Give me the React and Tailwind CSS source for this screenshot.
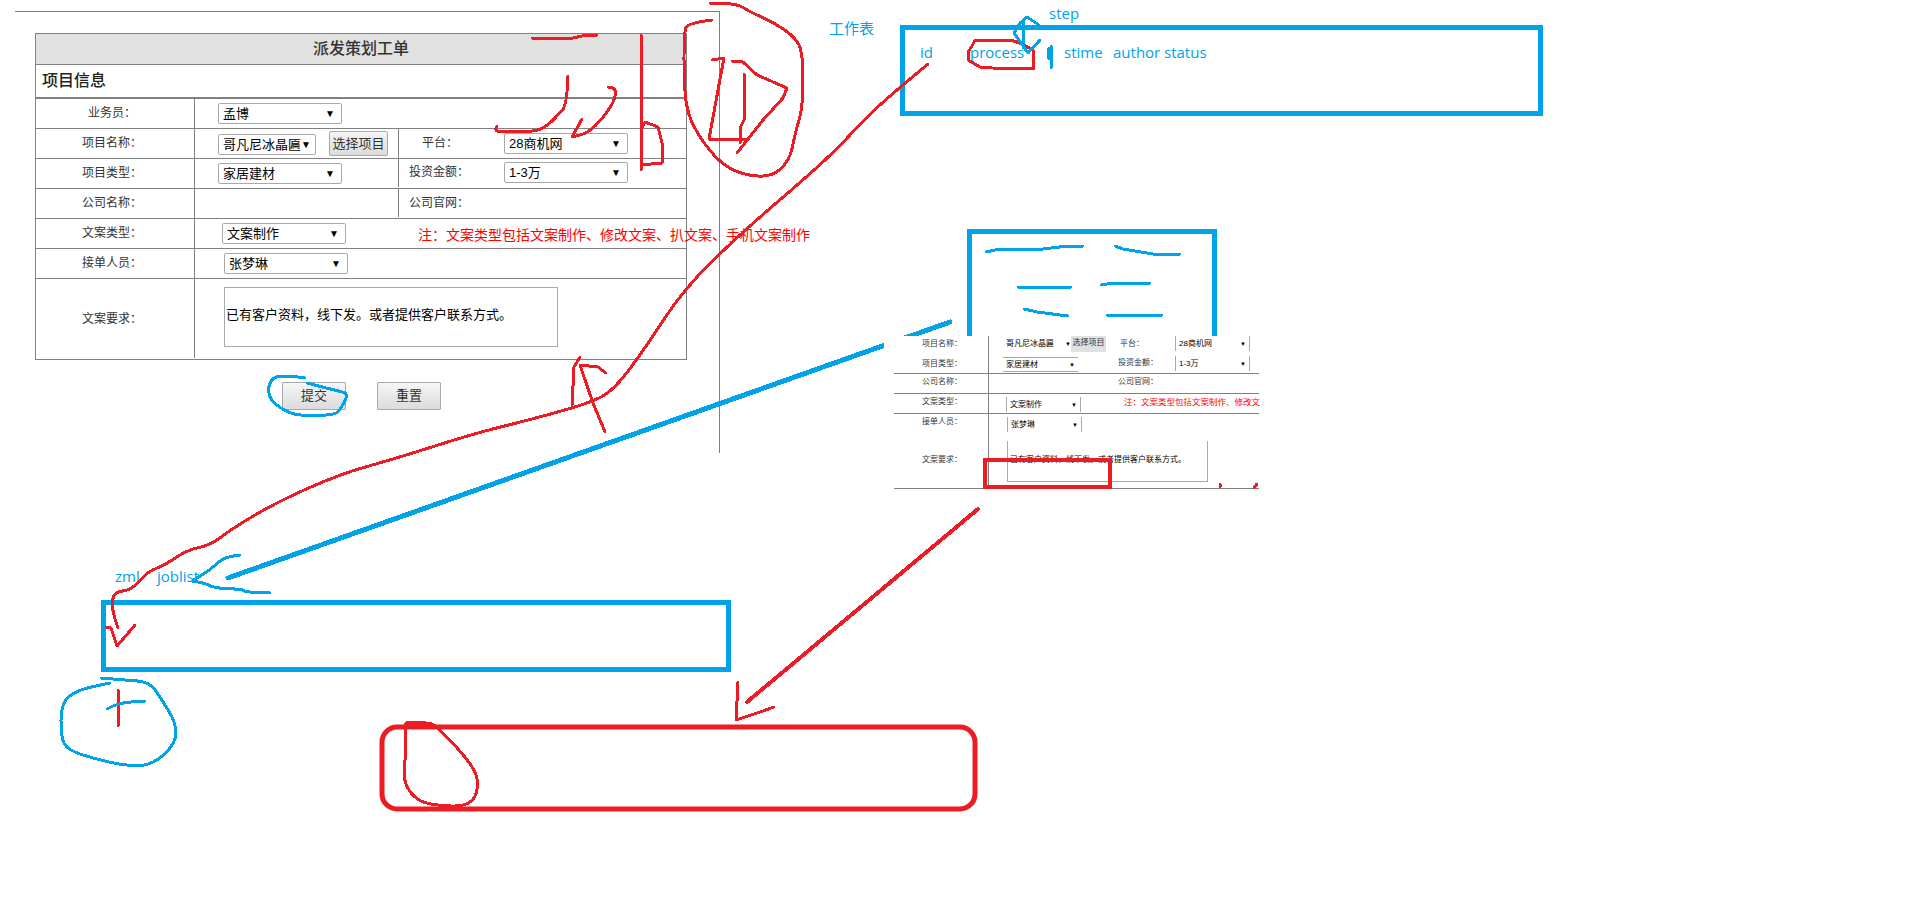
const RED = "#ed1c24";
const BLUE = "#00a2e8";
const COLON = "\uFF1A";
const COMMA = "\uFF0C";

function Ink({ pts, w = 3, c = RED }) {
  return <polyline points={pts} fill="none" stroke={c} strokeWidth={w} strokeLinejoin="round" strokeLinecap="round" shapeRendering="crispEdges" />;
}

// Freehand curve: rounds the corners between the sampled points of a stroke.
function Curve({ pts, w = 3, c = RED }) {
  const p = pts.split(" ").map((s) => s.split(",").map(Number));
  let d = `M${p[0][0]} ${p[0][1]}`;
  for (let i = 1; i < p.length - 1; i++) {
    const mx = (p[i][0] + p[i + 1][0]) / 2;
    const my = (p[i][1] + p[i + 1][1]) / 2;
    d += ` Q${p[i][0]} ${p[i][1]} ${mx} ${my}`;
  }
  const last = p[p.length - 1];
  d += ` L${last[0]} ${last[1]}`;
  return <path d={d} fill="none" stroke={c} strokeWidth={w} strokeLinecap="round" strokeLinejoin="round" shapeRendering="crispEdges" />;
}

function Sel({ text, w = "w-[124px]" }) {
  return (
    <div className={`flex h-[21px] ${w} items-center justify-between rounded-[2px] border border-[#a9a9a9] bg-white pl-[4px] pr-[6px] text-[13px] leading-none text-black`}>
      <span className="whitespace-nowrap">{text}</span>
      <span className="text-[10px] leading-none">▼</span>
    </div>
  );
}

function Row({ label, h = "h-[30px]", border = "border-b border-[#808080]", labelClass = "pb-[1px]", children }) {
  return (
    <div className={`flex ${h} ${border}`}>
      <div className={`flex w-[159px] shrink-0 items-center justify-center border-r border-[#808080] pr-[6px] text-[12px] text-[#333] ${labelClass}`}>{label + COLON}</div>
      <div className="flex min-w-0 flex-1 items-start">{children}</div>
    </div>
  );
}

function Form() {
  return (
    <div className="absolute left-[35px] top-[33px] h-[327px] w-[652px] border border-[#808080] bg-white">
      <div className="flex h-[31px] items-center justify-center border-b border-[#808080] bg-[#e1e1e1] text-[16px] font-medium text-[#333]">派发策划工单</div>
      <div className="flex h-[34px] items-center border-b-2 border-[#808080] pl-[6px] text-[16px] font-medium text-[#222]">项目信息</div>
      <Row label="业务员">
        <div className="ml-[23px] mt-[4px]"><Sel text="孟博" /></div>
      </Row>
      <Row label="项目名称">
        <div className="ml-[23px] mt-[5px]"><Sel text="哥凡尼冰晶匾" w="w-[98px]" /></div>
        <button className="ml-[13px] mt-[2px] h-[25px] w-[59px] rounded-[2px] border border-[#a9a9a9] bg-gradient-to-b from-[#f4f4f4] to-[#dcdcdc] text-[13px] text-[#333]">选择项目</button>
        <div className="ml-[10px] flex h-[29px] w-[106px] items-center border-l border-[#808080] pb-[1px] pl-[23px] text-[12px] text-[#333]">{"平台" + COLON}</div>
        <div className="mt-[4px]"><Sel text="28商机网" /></div>
      </Row>
      <Row label="项目类型">
        <div className="ml-[23px] mt-[4px]"><Sel text="家居建材" /></div>
        <div className="ml-[56px] flex h-[28px] w-[106px] items-center border-l border-[#808080] pb-[2px] pl-[10px] text-[12px] text-[#333]">{"投资金额" + COLON}</div>
        <div className="mt-[3px]"><Sel text="1-3万" /></div>
      </Row>
      <Row label="公司名称">
        <div className="ml-[203px] flex h-[28px] items-center border-l border-[#808080] pl-[10px] text-[12px] text-[#333]">{"公司官网" + COLON}</div>
      </Row>
      <Row label="文案类型">
        <div className="ml-[27px] mt-[4px]"><Sel text="文案制作" /></div>
        <div className="ml-[72px] mt-[6px] whitespace-nowrap text-[14px] leading-[20px] text-[#ff0000]">{"注" + COLON + "文案类型包括文案制作、修改文案、扒文案、手机文案制作"}</div>
      </Row>
      <Row label="接单人员">
        <div className="ml-[29px] mt-[4px]"><Sel text="张梦琳" /></div>
      </Row>
      <Row label="文案要求" h="h-[79px]" border="" labelClass="">
        <div className="ml-[29px] mt-[8px] flex h-[60px] w-[334px] items-center border border-[#a9a9a9] pb-[4px] pl-[1px] text-[13px] text-black">{"已有客户资料" + COMMA + "线下发。或者提供客户联系方式。"}</div>
      </Row>
    </div>
  );
}

function SubmitRow() {
  return (
    <div className="absolute left-[282px] top-[382px] flex gap-[31px] text-[13px] text-[#333]">
      <button className="h-[28px] w-[64px] rounded-[1px] border border-[#a9a9a9] bg-gradient-to-b from-[#f6f6f6] to-[#dcdcdc]">提交</button>
      <button className="h-[28px] w-[64px] rounded-[1px] border border-[#a9a9a9] bg-gradient-to-b from-[#f6f6f6] to-[#dcdcdc]">重置</button>
    </div>
  );
}

function MiniSel({ text, sides = "border-x border-[#a9a9a9]", w = "w-[75px]" }) {
  return (
    <div className={`flex h-[15px] ${w} items-center justify-between ${sides} px-[3px] text-[8px] leading-none text-black`}>
      <span className="whitespace-nowrap">{text}</span>
      <span className="text-[6px]">▼</span>
    </div>
  );
}

function MiniRow({ label, h, line, children }) {
  return (
    <div className={`flex ${h} ${line ? "border-b border-[#808080]" : ""}`}>
      <div className="w-[95px] shrink-0 border-r border-[#808080] pl-[28px] pt-[3px] text-[8px] leading-[10px] text-[#333]">{label + COLON}</div>
      <div className="relative flex min-w-0 flex-1 items-start">{children}</div>
    </div>
  );
}

function Pasted() {
  return (
    <div className="absolute left-[884px] top-[336px] h-[154px] w-[375px] bg-white pl-[10px]">
      <MiniRow label="项目名称" h="h-[20px]">
        <div className="ml-[17px] flex w-[65px] justify-between pt-[3px] text-[8px] leading-[10px] text-black"><span className="whitespace-nowrap">哥凡尼冰晶匾</span><span className="text-[6px]">▼</span></div>
        <div className="h-[16px] w-[35px] bg-[#e1e1e1] text-center text-[8px] leading-[14px] text-[#333]">选择项目</div>
        <div className="ml-[14px] w-[55px] pt-[3px] text-[8px] leading-[10px] text-[#333]">{"平台" + COLON}</div>
        <MiniSel text="28商机网" />
      </MiniRow>
      <MiniRow label="项目类型" h="h-[18px]" line>
        <div className="ml-[14px] mt-[1px]"><MiniSel text="家居建材" sides="border-y border-[#a9a9a9]" /></div>
        <div className="ml-[40px] w-[57px] pt-[2px] text-[8px] leading-[10px] text-[#333]">{"投资金额" + COLON}</div>
        <MiniSel text="1-3万" />
      </MiniRow>
      <MiniRow label="公司名称" h="h-[20px]" line>
        <div className="ml-[129px] pt-[3px] text-[8px] leading-[10px] text-[#333]">{"公司官网" + COLON}</div>
      </MiniRow>
      <MiniRow label="文案类型" h="h-[20px]" line>
        <div className="ml-[17px] mt-[3px]"><MiniSel text="文案制作" /></div>
        <div className="ml-[43px] mt-[3px] whitespace-nowrap text-[8.5px] leading-[11px] text-[#ff0000]">{"注" + COLON + "文案类型包括文案制作、修改文"}</div>
      </MiniRow>
      <MiniRow label="接单人员" h="h-[75px]" line>
        <div className="flex flex-col">
          <div className="ml-[18px] mt-[3px]"><MiniSel text="张梦琳" /></div>
          <div className="ml-[18px] mt-[9px] flex h-[41px] w-[201px] items-center border-x border-b border-[#a9a9a9] pl-[2px] pb-[3px] text-[8px] leading-none whitespace-nowrap text-black">{"已有客户资料" + COMMA + "线下发。或者提供客户联系方式。"}</div>
        </div>
      </MiniRow>
      <div className="absolute left-[38px] top-[119px] bg-white text-[8px] leading-[10px] text-[#333]">{"文案要求" + COLON}</div>
    </div>
  );
}

function UnderInk() {
  return (
    <svg className="absolute left-0 top-0" width="1914" height="916">
      <rect x="902.5" y="27.5" width="638" height="86" fill="none" stroke={BLUE} strokeWidth="5" shapeRendering="crispEdges" />
      <rect x="969.5" y="231.5" width="245" height="120" fill="none" stroke={BLUE} strokeWidth="5" shapeRendering="crispEdges" />
      <rect x="103.5" y="602.5" width="625" height="67" fill="none" stroke={BLUE} strokeWidth="5" shapeRendering="crispEdges" />
      <Ink c={BLUE} w={5} pts="228,578 950,322" />
      <Ink c={BLUE} w={3} pts="986,252 1000,249 1043,249 1068,246 1083,246" />
      <Ink c={BLUE} w={3} pts="1115,246 1123,249 1153,254 1180,254" />
      <Ink c={BLUE} w={3} pts="1018,287 1071,287" />
      <Ink c={BLUE} w={3} pts="1101,285 1113,283 1150,283" />
      <Ink c={BLUE} w={3} pts="1024,309 1037,312 1068,316" />
      <Ink c={BLUE} w={3} pts="1107,315 1162,315" />
    </svg>
  );
}

function OverInk() {
  return (
    <svg className="absolute left-0 top-0" width="1914" height="916">
      <Ink pts="532,38 573,38 587,35 597,35" />
      <Curve pts="568,76 567,105 558,115 545,128 530,132 500,132 495,130 497,126" />
      <Curve pts="608,87 616,87 615,100 603,118 588,133 572,137" />
      <Ink pts="572,137 582,119" />
      <Ink pts="641,35 641,170" />
      <Ink pts="642,128 645,122 658,127 662,143 662,163 641,165" />
      <Curve pts="712,20 688,23 684,32 684,87 688,115 700,138 720,163 743,175 772,177 790,160 795,133 803,107 803,53 795,37 773,22 750,12 738,4 710,3" />
      <Ink pts="712,60 724,58 718,90 709,139 747,139" />
      <Ink pts="732,61 743,62 757,75 787,88 783,98 763,120 737,153" />
      <Ink pts="744,74 744,120 740,128 740,143" />
      <Ink pts="975,40 1011,40 1022,44 1033,50 1034,69 992,68 980,67 968,60 968,52 972,46 975,40" />
      <Ink c={BLUE} w={3} pts="1040,40 1028,53 1014,33 1020,23 1027,17 1039,25" />
      <Ink c={BLUE} w={3} pts="1023,20 1023,48" />
      <Ink c={BLUE} w={3} pts="1051,46 1051,68" />
      <Ink c={BLUE} w={6} pts="1050,50 1050,57" />
      <Curve pts="928,64 911,78 868,115 830,157 741,233 683,290 646,347 614,390 590,403 529,420 476,433 394,459 340,474 275,503 230,530 211,545 187,550 165,565 147,572 132,590 113,592 112,610 118,628" />
      <Ink pts="106,627 111,628 117,646 135,625" />
      <Ink pts="580,357 574,367 572,405" />
      <Ink pts="580,365 598,367 606,373" />
      <Ink pts="580,365 593,403 605,432" />
      <Curve c={BLUE} pts="305,378 295,376 271,376 267,397 284,411 301,416 334,415 340,410 348,395 343,392 326,388 307,383" />
      <Curve c={BLUE} pts="240,555 232,556 222,559 210,570 192,581" />
      <Curve c={BLUE} pts="192,581 205,583 212,587 227,589 242,589 245,592 270,593" />
      <Curve c={BLUE} pts="101,678 125,680 150,682 162,700 176,723 176,743 153,765 126,766 92,758 68,750 61,738 61,703 77,690 110,683" />
      <Ink pts="118,690 118,726" />
      <Curve c={BLUE} pts="107,709 117,703 145,701" />
      <rect x="985" y="460" width="125" height="27" fill="none" stroke={RED} strokeWidth="4" shapeRendering="crispEdges" />
      <Ink pts="1220,484 1220,487" />
      <Ink pts="1257,484 1254,488" />
      <Ink w={4} pts="978,509 747,702" />
      <Ink pts="738,682 736,720 745,717 760,712 774,707" />
      <rect x="382" y="727" width="593" height="82" rx="15" fill="none" stroke={RED} strokeWidth="5" />
      <Curve pts="406,723 406,752 403,780 413,797 429,805 472,807 480,780 466,757 438,728 432,723 407,722" />
      <Ink w={5} pts="408,724 430,724" />
    </svg>
  );
}

function Note({ className, children }) {
  return <div className={`absolute whitespace-nowrap leading-none text-[#00a2e8] ${className}`}>{children}</div>;
}

export default function App() {
  return (
    <div className="relative h-[916px] w-[1914px] overflow-hidden bg-white font-['Liberation_Sans','Noto_Sans_CJK_SC',sans-serif]">
      <div className="absolute left-[15px] top-[11px] h-[442px] w-[705px] border-r border-t border-[#808080]" />
      <Form />
      <SubmitRow />
      <UnderInk />
      <Pasted />
      <Note className="left-[829px] top-[21px] text-[15px]">工作表</Note>
      <Note className="left-[1049px] top-[6px] text-[15px] font-['Open_Sans']">step</Note>
      <Note className="left-[920px] top-[45px] text-[15px] font-['Open_Sans']">id</Note>
      <Note className="left-[970px] top-[45px] text-[15px] font-['Open_Sans']">process</Note>
      <Note className="left-[1064px] top-[45px] text-[15px] font-['Open_Sans']">stime</Note>
      <Note className="left-[1113px] top-[45px] text-[15px] font-['Open_Sans']">author</Note>
      <Note className="left-[1164px] top-[45px] text-[15px] font-['Open_Sans']">status</Note>
      <Note className="left-[115px] top-[569px] text-[15px] font-['Open_Sans']">zml</Note>
      <Note className="left-[157px] top-[569px] text-[15px] font-['Open_Sans']">joblist</Note>
      <OverInk />
    </div>
  );
}
